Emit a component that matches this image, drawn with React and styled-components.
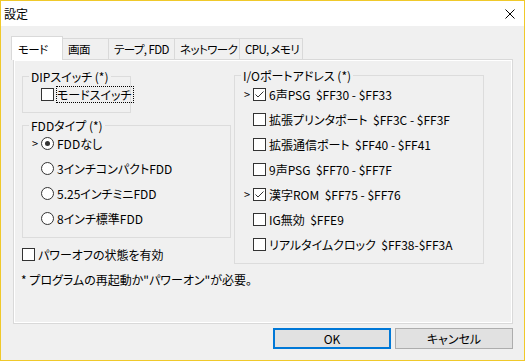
import React from 'react'
import styled, { createGlobalStyle } from 'styled-components'

const GlobalStyle = createGlobalStyle`
  html, body {
    margin: 0;
    padding: 0;
    background: #f0f0f0;
  }
  body {
    font-family: "Noto Sans CJK JP", "Noto Sans", sans-serif;
    font-size: 12px;
    color: #000;
    font-feature-settings: "palt";
  }
  * { box-sizing: border-box; }
`

const Window = styled.div`
  width: 525px;
  height: 361px;
  border: 1px solid #f0c92a;
  background: #f0f0f0;
  display: flex;
  flex-direction: column;
`

const TitleBar = styled.div`
  flex: none;
  height: 25px;
  background: #fff;
  display: flex;
  align-items: center;
  justify-content: space-between;
  padding: 0 9px 0 3px;
`

const Title = styled.span`
  line-height: 25px;
`

const Body = styled.div`
  flex: 1;
  display: flex;
  flex-direction: column;
  padding: 10px 11px 0 12px;
`

const TabRow = styled.div`
  display: flex;
  align-items: flex-end;
  height: 24px;
  margin: 0 0 -1px -2px;
`

const Tab = styled.div`
  position: relative;
  z-index: ${p => (p.$active ? 2 : 1)};
  width: ${p => p.$w}px;
  height: ${p => (p.$active ? 24 : 21)}px;
  margin-left: ${p => (p.$first ? 0 : -1)}px;
  margin-bottom: ${p => (p.$active ? 0 : 1)}px;
  padding-left: ${p => (p.$active ? 6 : 5)}px;
  border: 1px solid #d9d9d9;
  border-bottom: none;
  background: ${p => (p.$active ? '#fff' : '#f0f0f0')};
  display: flex;
  align-items: center;
  white-space: pre;
  overflow: hidden;
  font-size: 11.5px;
  letter-spacing: -0.6px;
`

const Panel = styled.div`
  height: 265px;
  border: 1px solid #d9d9d9;
  box-shadow: inset 0 0 0 1px #fff;
  display: flex;
  align-items: flex-start;
  gap: 3px;
  padding: 10px 0 0 8px;
`

const Column = styled.div`
  width: ${p => p.$w}px;
  margin-top: ${p => p.$mt || 0}px;
  display: flex;
  flex-direction: column;
`

const GroupBox = styled.fieldset`
  margin: ${p => p.$mt || 0}px 0 0;
  min-width: 0;
  width: ${p => p.$w}px;
  border: 1px solid #dcdcdc;
  padding: ${p => p.$pt}px 6px ${p => p.$pb}px;
`

const Legend = styled.legend`
  padding: 0 2px;
  line-height: 13px;
  font-size: 12px;
`

const List = styled.div`
  display: flex;
  flex-direction: column;
  gap: 8px;
`

const Row = styled.div`
  display: flex;
  align-items: center;
  height: 17px;
  margin-top: ${p => p.$mt || 0}px;
  white-space: pre;
`

const Marker = styled.span`
  flex: none;
  width: 12px;
  text-align: center;
  font-size: 11px;
  line-height: 17px;
`

const Box = styled.span`
  flex: none;
  width: 13px;
  height: 13px;
  border: 1px solid #333;
  border-radius: ${p => (p.$round ? '50%' : '0')};
  background: #fff;
  display: flex;
  align-items: center;
  justify-content: center;
`

const Dot = styled.span`
  width: 5px;
  height: 5px;
  border-radius: 50%;
  background: #333;
`

const Label = styled.span`
  margin-left: 2px;
  padding-right: 1px;
  height: 17px;
  line-height: 15px;
  border: 1px ${p => (p.$focus ? 'dotted #000' : 'solid transparent')};
`

const Note = styled.div`
  margin: 8px 0 0 -1px;
  line-height: 17px;
  white-space: pre;
`

const ButtonRow = styled.div`
  display: flex;
  justify-content: flex-end;
  gap: 4px;
  margin-top: 4px;
`

const Button = styled.button`
  width: 118px;
  height: 21px;
  padding: 0;
  background: #e1e1e1;
  border: ${p => (p.$default ? '2px solid #0078d7' : '1px solid #adadad')};
  font: inherit;
  color: #000;
`

const Check = () => (
  <svg width="11" height="11" viewBox="0 0 11 11">
    <polyline points="1.5,5.5 4,8 9.5,2.5" fill="none" stroke="#333" strokeWidth="1" />
  </svg>
)

const CloseIcon = () => (
  <svg width="10" height="10" viewBox="0 0 10 10">
    <path d="M0.5 0.5 L9.5 9.5 M9.5 0.5 L0.5 9.5" stroke="#000" strokeWidth="1" />
  </svg>
)

const CheckItem = ({ label, checked, marker, focus, noMarker, mt }) => (
  <Row $mt={mt}>
    {!noMarker && <Marker>{marker ? '>' : ''}</Marker>}
    <Box>{checked && <Check />}</Box>
    <Label $focus={focus}>{label}</Label>
  </Row>
)

const RadioItem = ({ label, checked, marker }) => (
  <Row>
    <Marker>{marker ? '>' : ''}</Marker>
    <Box $round>{checked && <Dot />}</Box>
    <Label>{label}</Label>
  </Row>
)

const tabs = [
  { name: 'モード', w: 52 },
  { name: '画面', w: 47 },
  { name: 'テープ, FDD', w: 67 },
  { name: 'ネットワーク', w: 66 },
  { name: 'CPU, メモリ', w: 64 },
]

const fddTypes = [
  { label: 'FDDなし', checked: true },
  { label: '3インチコンパクトFDD' },
  { label: '5.25インチミニFDD' },
  { label: '8インチ標準FDD' },
]

const ioPorts = [
  { label: '6声PSG  $FF30 - $FF33', checked: true },
  { label: '拡張プリンタポート  $FF3C - $FF3F' },
  { label: '拡張通信ポート  $FF40 - $FF41' },
  { label: '9声PSG  $FF70 - $FF7F' },
  { label: '漢字ROM  $FF75 - $FF76', checked: true },
  { label: 'IG無効  $FFE9' },
  { label: 'リアルタイムクロック  $FF38-$FF3A' },
]

export default function App() {
  return (
    <>
      <GlobalStyle />
      <Window>
        <TitleBar>
          <Title>設定</Title>
          <CloseIcon />
        </TitleBar>
        <Body>
          <TabRow>
            {tabs.map((t, i) => (
              <Tab key={t.name} $w={t.w} $active={i === 0} $first={i === 0}>
                {t.name}
              </Tab>
            ))}
          </TabRow>
          <Panel>
            <Column $w={209}>
              <GroupBox $w={109} $pt={3} $pb={9}>
                <Legend>DIPスイッチ (*)</Legend>
                <CheckItem label="モードスイッチ" focus />
              </GroupBox>
              <GroupBox $w={209} $mt={6} $pt={3} $pb={10}>
                <Legend>FDDタイプ (*)</Legend>
                <List>
                  {fddTypes.map(f => (
                    <RadioItem key={f.label} label={f.label} checked={f.checked} marker={f.checked} />
                  ))}
                </List>
              </GroupBox>
              <CheckItem label="パワーオフの状態を有効" noMarker mt={8} />
              <Note>* プログラムの再起動か"パワーオン"が必要。</Note>
            </Column>
            <Column $w={250} $mt={-1}>
              <GroupBox $w={250} $pt={4} $pb={10}>
                <Legend>I/Oポートアドレス (*)</Legend>
                <List>
                  {ioPorts.map(p => (
                    <CheckItem key={p.label} label={p.label} checked={p.checked} marker={p.checked} />
                  ))}
                </List>
              </GroupBox>
            </Column>
          </Panel>
          <ButtonRow>
            <Button $default>OK</Button>
            <Button>キャンセル</Button>
          </ButtonRow>
        </Body>
      </Window>
    </>
  )
}
